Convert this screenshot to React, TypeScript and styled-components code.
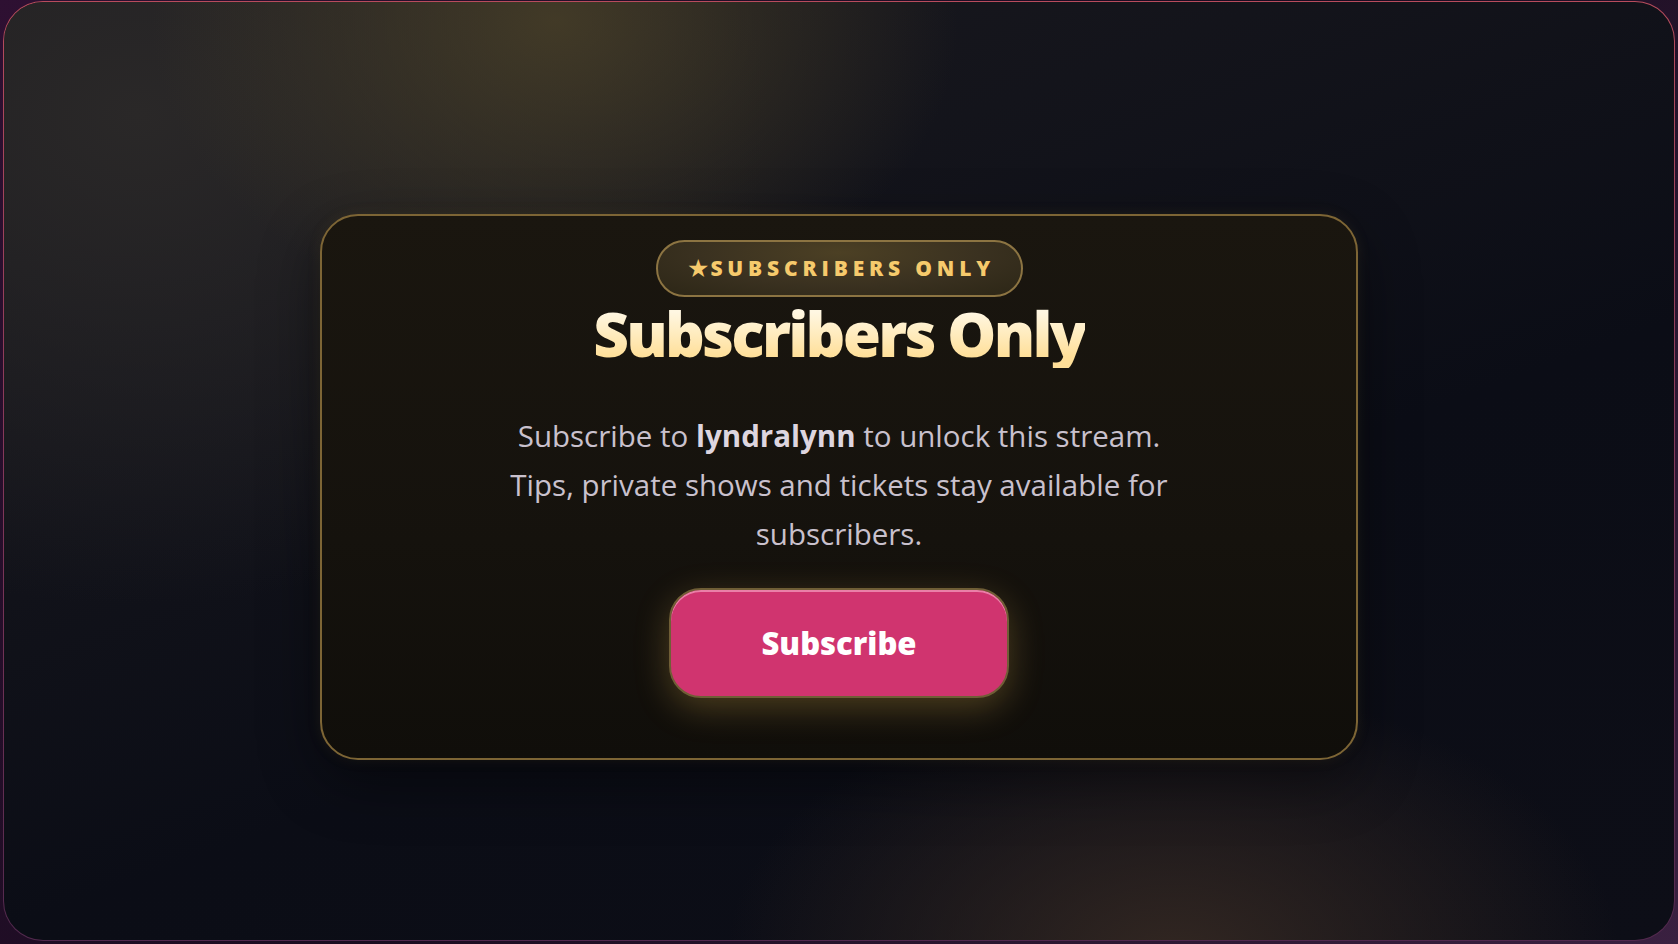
import React from "react";
import styled, { createGlobalStyle } from "styled-components";

const Global = createGlobalStyle`
  html, body {
    margin: 0;
    padding: 0;
    background: #150a19;
  }
  body {
    font-family: "Open Sans", "Noto Sans", "DejaVu Sans", sans-serif;
  }
  * { box-sizing: border-box; }
`;

const Screen = styled.div`
  width: 100%;
  height: 944px;
  padding: 1px 3px 3px 3px;
  background: linear-gradient(135deg, #2e1032 0%, #1a0c20 50%, #3a2040 100%);
`;

const Stage = styled.main`
  height: 100%;
  border-radius: 40px;
  border: 1.5px solid transparent;
  background:
    radial-gradient(ellipse 560px 420px at 33% 2%, rgba(72, 63, 40, 0.85), rgba(72, 63, 40, 0) 72%) padding-box,
    radial-gradient(ellipse 620px 380px at 70% 102%, rgba(52, 40, 34, 0.95), rgba(52, 40, 34, 0) 72%) padding-box,
    radial-gradient(ellipse 900px 700px at 8% 12%, rgba(42, 40, 40, 1), rgba(42, 40, 40, 0) 70%) padding-box,
    linear-gradient(160deg, #1c1b20 0%, #0b0d16 60%, #0d0e17 100%) padding-box,
    linear-gradient(180deg, #b84c5c 0%, #84385a 50%, #52294e 100%) border-box;
  display: flex;
  flex-direction: column;
  align-items: center;
  justify-content: center;
  padding-top: 31px;
`;

const Card = styled.section`
  width: 1038px;
  border-radius: 38px;
  border: 2px solid #7d6535;
  background: linear-gradient(180deg, #1a160f 0%, #15120d 60%, #100e0a 100%);
  box-shadow: 0 0 14px rgba(150, 120, 60, 0.12), 0 20px 60px rgba(0, 0, 0, 0.45);
  display: flex;
  flex-direction: column;
  align-items: center;
  padding: 24px 40px 60px;
`;

const Badge = styled.div`
  width: 367px;
  height: 57px;
  border-radius: 999px;
  border: 2px solid #8c7442;
  background: radial-gradient(ellipse at 50% 20%, #4c4024 0%, #3a3120 55%, #2c2616 100%);
  display: flex;
  align-items: center;
  justify-content: center;
  color: #f6ca6c;
  font-size: 21px;
  font-weight: 800;
  letter-spacing: 0.23em;
  padding-left: 4px;
`;

const Star = styled.span`
  font-family: "DejaVu Sans", sans-serif;
  letter-spacing: 0;
  font-size: 25px;
  line-height: 1;
  margin-right: 1px;
`;

const Title = styled.h1`
  margin: 1px 0 0;
  font-size: 62px;
  line-height: 70px;
  font-weight: 800;
  letter-spacing: -0.045em;
  background: linear-gradient(180deg, #fff7e2 20%, #ffdf98 85%);
  -webkit-background-clip: text;
  background-clip: text;
  color: transparent;
`;

const Message = styled.p`
  margin: 43px 0 0;
  max-width: 690px;
  text-align: center;
  font-size: 29.5px;
  line-height: 49px;
  color: #c9c1cd;
`;

const Name = styled.strong`
  font-weight: 700;
  color: #ddd5df;
`;

const SubscribeButton = styled.button`
  margin-top: 30px;
  width: 340px;
  height: 110px;
  border-radius: 32px;
  border: 2px solid #6f5e36;
  background: #d0346f;
  color: #ffffff;
  font-family: "Open Sans", "Noto Sans", sans-serif;
  font-size: 31px;
  font-weight: 800;
  letter-spacing: 0;
  cursor: pointer;
  box-shadow:
    inset 0 2px 0 rgba(255, 190, 215, 0.55),
    0 10px 34px rgba(200, 160, 70, 0.32);
`;

export default function App() {
  return (
    <>
      <Global />
      <Screen>
        <Stage>
          <Card>
            <Badge>
              <Star>★</Star>SUBSCRIBERS ONLY
            </Badge>
            <Title>Subscribers Only</Title>
            <Message>
              Subscribe to <Name>lyndralynn</Name> to unlock this stream. Tips,
              private shows and tickets stay available for subscribers.
            </Message>
            <SubscribeButton>Subscribe</SubscribeButton>
          </Card>
        </Stage>
      </Screen>
    </>
  );
}
